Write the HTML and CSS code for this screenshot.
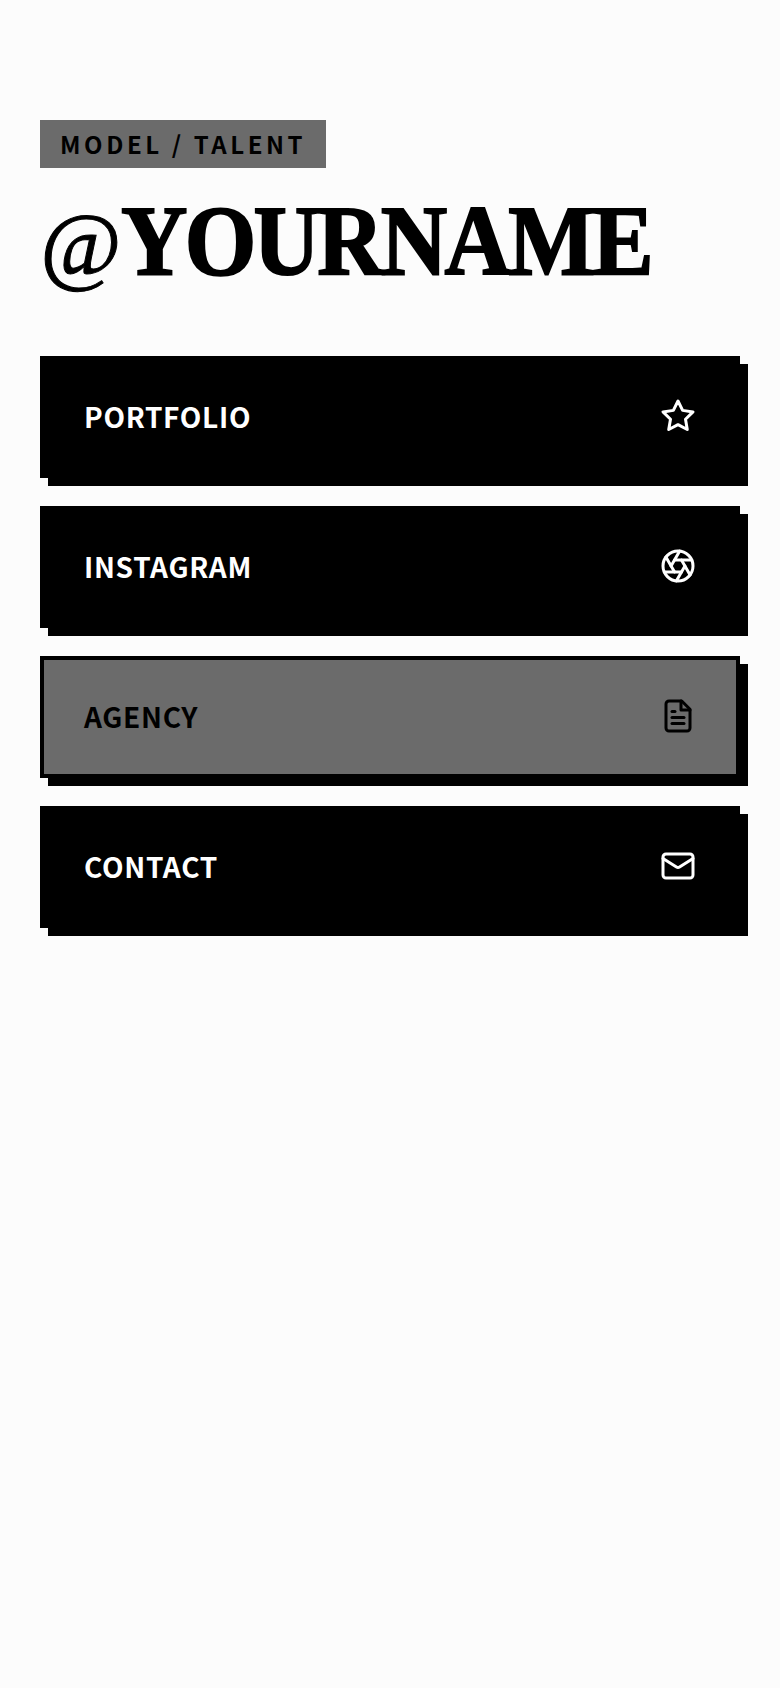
FILE: index.html
```html
<!DOCTYPE html>
<html lang="en">
<head>
    <meta charset="UTF-8">
    <meta name="viewport" content="width=device-width, initial-scale=1.0">
    <title>@YOURNAME</title>
    <link rel="stylesheet" href="styles.css">
</head>
<body>
    <main class="container">
        <header class="profile">
            <span class="tag">MODEL / TALENT</span>
            <h1 class="name"><span class="at">@</span><span class="handle">YOURNAME</span></h1>
        </header>

        <nav class="links">
            <a class="link" href="#">
                <span>PORTFOLIO</span>
                <svg class="icon" viewBox="0 0 24 24"><path d="M12 2l3.09 6.26L22 9.27l-5 4.87 1.18 6.88L12 17.77l-6.18 3.25L7 14.14 2 9.27l6.91-1.01L12 2z"/></svg>
            </a>
            <a class="link" href="#">
                <span>INSTAGRAM</span>
                <svg class="icon" viewBox="0 0 24 24"><circle cx="12" cy="12" r="10"/><path d="m14.31 8 5.74 9.94"/><path d="M9.69 8h11.48"/><path d="m7.38 12 5.74-9.94"/><path d="M9.69 16 3.95 6.06"/><path d="M14.31 16H2.83"/><path d="m16.62 12-5.74 9.94"/></svg>
            </a>
            <a class="link link-active" href="#">
                <span>AGENCY</span>
                <svg class="icon" viewBox="0 0 24 24"><path d="M14.5 2H6a2 2 0 0 0-2 2v16a2 2 0 0 0 2 2h12a2 2 0 0 0 2-2V7.5L14.5 2z"/><path d="M14 2v6h6"/><path d="M8 9h2"/><path d="M8 13h8"/><path d="M8 17h8"/></svg>
            </a>
            <a class="link" href="#">
                <span>CONTACT</span>
                <svg class="icon" viewBox="0 0 24 24"><rect x="2" y="4" width="20" height="16" rx="2"/><path d="m22 7-8.97 5.7a1.94 1.94 0 0 1-2.06 0L2 7"/></svg>
            </a>
        </nav>
    </main>
</body>
</html>
```

FILE: styles.css
```css
body {
    margin: 0;
    min-height: 100vh;
    background-color: #fcfcfc;
    color: #000;
    font-family: "Noto Sans CJK JP", "Noto Sans", sans-serif;
}
.container {
    padding: 120px 40px 40px;
}
.profile {
    margin-bottom: 59px;
}
.tag {
    display: inline-block;
    padding: 7px 20px;
    background-color: #6b6b6b;
    font-size: 24px;
    line-height: 34px;
    font-weight: 700;
    letter-spacing: 3.6px;
}
.name {
    margin: 21px 0 0;
    font-family: "Liberation Serif", serif;
    font-size: 100px;
    line-height: 104px;
    font-weight: 700;
    white-space: nowrap;
}
.at {
    font-size: 88px;
    font-style: italic;
    font-weight: 400;
    -webkit-text-stroke: 1px #000;
}
.handle {
    display: inline-block;
    letter-spacing: -3px;
    -webkit-text-stroke: 2px #000;
    transform: scaleX(0.92);
    transform-origin: left center;
}
.links {
    display: flex;
    flex-direction: column;
    gap: 28px;
}
.link {
    display: flex;
    align-items: center;
    justify-content: space-between;
    padding: 38px 40px 40px;
    background-color: #000;
    border: 4px solid #000;
    box-shadow: 8px 8px 0 #000;
    color: #fff;
    font-size: 28px;
    line-height: 36px;
    font-weight: 700;
    letter-spacing: 0.7px;
    text-decoration: none;
}
.link-active {
    background-color: #6b6b6b;
    color: #000;
}
.icon {
    display: block;
    width: 36px;
    height: 36px;
    fill: none;
    stroke: currentColor;
    stroke-width: 2;
    stroke-linecap: round;
    stroke-linejoin: round;
}
```
